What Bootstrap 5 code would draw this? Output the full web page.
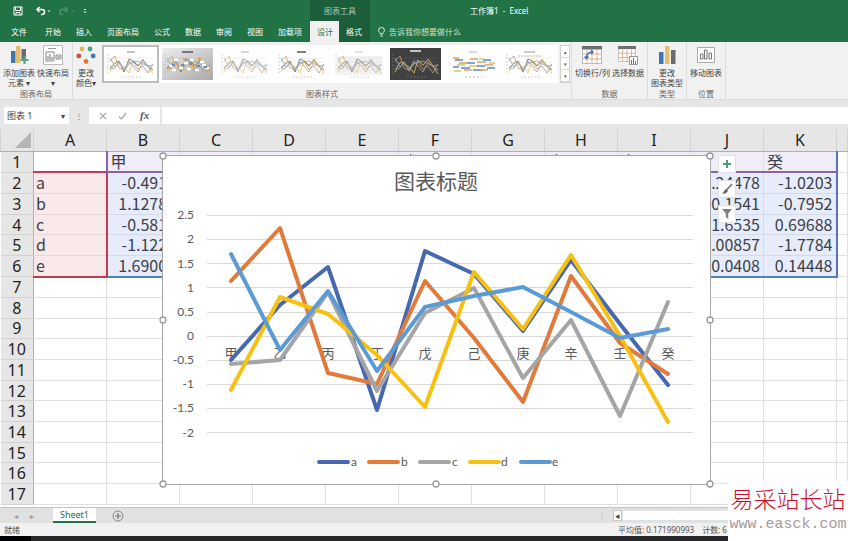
<!DOCTYPE html>
<html lang="zh-CN">
<head>
<meta charset="utf-8">
<meta name="viewport" content="width=device-width, initial-scale=1">
<title>工作簿1 - Excel</title>
<link href="https://cdn.jsdelivr.net/npm/bootstrap@5.3.0/dist/css/bootstrap.min.css" rel="stylesheet">
<style>
:root{--xl:#217346;--xl-dark:#1b5e39;--chrome:#e6e6e6}
body{font-family:"Noto Sans","Noto Sans CJK SC",sans-serif;font-size:8px;line-height:10px;color:#444;background:#fff}
button,input{font:inherit;color:inherit}
button{border:0;background:none;padding:0}
svg{display:block;flex:none}
.xl-head{background:var(--xl);color:#fff}
.title-row{height:21px}
.tab-row{height:21px}
.qat{padding-left:13px;width:310px}
.ctx-title{width:60px;background:var(--xl-dark);color:#a3c9b3}
.doc-title{padding-left:100px}
.tab-row button{padding:0 8px 0 7px;color:#fff}
.tab-row .file-tab{padding:0 11px}
.tab-row .tab-on{background:#f1f1f1;color:var(--xl);padding:0 6px 0 7px}
.tab-row .tab-ctx{background:var(--xl-dark)}
.tab-row .tell{padding:0 8px;color:#cfe3d7}
.ribbon{background:#f1f1f1;height:58px;border-bottom:1px solid #dcdcdc}
.rgroup{border-right:1px solid #dcdcdc;padding-top:3px}
.rgroup .items{height:43px;padding:0 3px;gap:2px}
.rgroup .styles{padding-right:1px}
.rgroup .cap{height:12px;color:#666;text-align:center;line-height:12px}
.rbtn{display:flex;flex-direction:column;align-items:center;text-align:center;white-space:nowrap}
.rbtn svg{margin-bottom:3px}
.gallery{background:#fff;height:38px}
.thumb{width:57px;height:38px;padding:3px;border:0}
.thumb.chosen{padding:1px;border:2px solid #bdbdbd}
.gscroll{width:10px;height:38px;background:#fff;border:1px solid #d0d0d0}
.gscroll button{flex:1;font-size:5px;line-height:8px;border-bottom:1px solid #d8d8d8}
.fbar{background:var(--chrome);padding:7px 0 5px 4px}
.fbar .box{background:#fff;height:17px}
.name-box{width:65px}
.name-box input,.formula{border:0;background:#fff;outline:0;min-width:0}
.name-box input{width:48px;padding:0 3px;font-size:9px}
.side-dots{width:20px;text-align:center}
.fx{width:71px;margin-right:2px}
.sheet{background:#fff;min-height:0;padding-bottom:2px}
.cells{width:100%;table-layout:fixed;border-collapse:collapse;font-family:"Noto Sans CJK SC",sans-serif;font-size:16px;line-height:18px;color:#3d4047}
.cells th{background:var(--chrome);font-family:"Noto Sans",sans-serif;font-weight:400;color:#222;text-align:center;padding:0;border:1px solid #d2d2d2}
.cells thead th{height:22px;border-top:0;border-bottom-color:#b0b0b0}
.cells tbody th{border-left:0;border-right-color:#b0b0b0}
.cells td{padding:0 3px 0 2px;border:1px solid #e0e0e0;white-space:nowrap;vertical-align:top}
.cells td.num{text-align:right;background:#e6ecfa;border-color:#d3daea}
.cells td.cat{background:#f0ecf8;border-bottom:2px solid #8a62a8;padding-left:3px}
.cells td.ser{background:#f9e9eb;border-color:#ead6d9;border-right:2px solid #c23b52}
.cells td.ser-top{border-top:2px solid #c23b52}
.cells td.ser-end{border-bottom:2px solid #c23b52}
.cells td.num-end{border-bottom:2px solid #5680b8}
.cells td.right-end{border-right:2px solid #5c70b4}
.cells td.left-cat{border-left:2px solid #8a62a8}
.corner svg{margin:2px 1px 0 auto}
.chart{position:absolute;left:162px;top:26px;width:549px;background:#fff;border:1px solid #a9a9a9}
.chart>svg{width:100%;height:auto;overflow:visible}
.chart-tools{position:absolute;left:718px;top:26px;display:flex;flex-direction:column;gap:7px}
.chart-tools button{width:18px;height:18px;background:#fff;border:1px solid #e2e2e2;display:flex;align-items:center;justify-content:center}
.chart text{font-family:Lato,"Noto Sans CJK SC",sans-serif;font-size:12px;fill:#595959}
.chart .cat-names text{font-size:13px}
.chart .chart-title{font-family:"Noto Sans CJK SC",sans-serif;font-size:21px}
.tabs-bar{height:16px;background:#e1e1e1;border-top:1px solid #c4c4c4;color:#999}
.sheet-tab{background:#fff;color:var(--xl);border-bottom:2px solid var(--xl);width:43px;font-size:9px;line-height:12px}
.navs{width:53px;padding-left:14px;gap:12px}
.hscroll{width:250px;padding:2px 0;gap:7px}
.hscroll .arrow{width:9px;background:#fff;border:1px solid #c8c8c8;color:#444;font-size:5px;line-height:8px}
.status{height:13px;background:#f1f1f1;color:#555}
.stats{width:230px;gap:8px}
.taskbar{height:5px;background:#29292b}
.taskbar div{width:31px;background:#000}
.stamp{position:absolute;right:0;bottom:0;width:120px;height:60px;background:#fff;text-align:center;z-index:3}
.stamp-name{color:#c8102e;font-family:"Noto Sans CJK SC",sans-serif;font-weight:300;font-size:23px;line-height:34px}
.stamp-url{color:#a79a9c;font-family:"Liberation Mono",monospace;font-size:15px;line-height:20px;text-decoration:none}
</style>
<script src="https://cdn.jsdelivr.net/npm/bootstrap@5.3.0/dist/js/bootstrap.bundle.min.js"></script>
</head>
<body>
<svg width="0" height="0" class="position-absolute" aria-hidden="true">
  <symbol id="plot" viewBox="0 0 51 32">
    <path d="M5 10H48M5 14H48M5 18H48M5 22H48" stroke="#999" stroke-opacity=".25" stroke-width=".6"/>
    <path d="M3 6v19M17 29h20" stroke="#999" stroke-width="1" stroke-dasharray="1.5 2" stroke-opacity=".6"/>
    <g fill="none" stroke-width=".8">
      <path d="M5 20L9 16 14 13 19 24 24 11 28 13 33 18 38 12 43 18 48 22" stroke="#4a5f8c"/>
      <path d="M5 13L10 8 14 20 19 22 24 13 28 18 33 24 38 14 43 19 48 22" stroke="#dc965f"/>
      <path d="M5 21L10 20 14 14 19 23 24 16 28 14 33 21 38 18 43 25 48 16" stroke="#a0a0a0"/>
      <path d="M5 24L10 14 14 16 19 19 24 25 28 12 33 17 38 11 43 18 48 26" stroke="#dfc160"/>
      <path d="M5 10L10 19 14 14 19 21 24 15 28 14 33 13 38 16 43 18 48 17" stroke="#8aaac2"/>
    </g>
  </symbol>
  <symbol id="bars" viewBox="0 0 51 32">
    <path d="M8 12h8M14 20h9M20 15h8M30 18h8M36 12h8M26 22h9M6 19h6M40 20h8" stroke="#5e86bd" stroke-width="1.4"/>
    <path d="M6 10h6M12 15h8M23 11h8M30 14h9M38 17h8M17 22h8M33 22h8" stroke="#dda05f" stroke-width="1.3"/>
    <path d="M10 17h8M22 18h8M32 11h5M42 15h6M7 23h7" stroke="#d9c66b" stroke-width="1.3"/>
    <path d="M18 29h17" stroke="#bbb" stroke-dasharray="2 2"/>
  </symbol>
  <symbol id="tgrid" viewBox="0 0 20 18">
    <path fill="#fff" stroke="#aaa" stroke-width=".8" d="M.5.5h19v17H.5z"/>
    <path fill="#6d6d6d" d="M0 0h20v3.500H0z"/>
    <path fill="none" stroke="#d99a6c" stroke-width=".8" d="M5 4v13M10 4v13M15 4v13M1 8h18M1 13h18"/>
  </symbol>
</svg>

<div class="vh-100 d-flex flex-column position-relative overflow-hidden">
  <header class="xl-head">
    <div class="title-row d-flex align-items-center">
      <div class="qat d-flex align-items-center gap-2">
        <button aria-label="保存"><svg width="10" height="10" viewBox="0 0 10 10"><path fill="none" stroke="#fff" d="M1 1h8v8H1zM2.500 1v3.500h5V1M3 9V6.500h4V9"/></svg></button>
        <button class="ms-1" aria-label="撤消"><svg width="16" height="10" viewBox="0 0 16 10"><path fill="none" stroke="#fff" stroke-width="1.500" d="M2 3.500h5a2.500 2.500 0 0 1 0 5H6M4.500 1L2 3.500 4.500 6"/><path fill="#fff" d="M12.500 4.500h3L14 6z"/></svg></button>
        <button aria-label="恢复"><svg width="16" height="10" viewBox="0 0 16 10"><path fill="none" stroke="#4f9370" stroke-width="1.500" d="M8 3.500H3a2.500 2.500 0 0 0 0 5h1M6 1l2.500 2.500L6 6"/><path fill="#4f9370" d="M12.500 4.500h3L14 6z"/></svg></button>
        <button aria-label="自定义快速访问工具栏"><svg width="4" height="8" viewBox="0 0 4 8"><path fill="#fff" d="M1 2h2v1H1zM.5 4.500h3L2 6z"/></svg></button>
      </div>
      <div class="ctx-title d-flex align-items-center justify-content-center align-self-stretch">图表工具</div>
      <div class="doc-title">工作簿1&nbsp; -&nbsp; Excel</div>
    </div>
    <nav class="tab-row d-flex">
      <button class="file-tab">文件</button><button>开始</button><button>插入</button><button>页面布局</button><button>公式</button><button>数据</button><button>审阅</button><button>视图</button><button>加载项</button><button class="tab-on">设计</button><button class="tab-ctx">格式</button>
      <button class="tell d-flex align-items-center gap-1"><svg width="7" height="10" viewBox="0 0 7 10"><path fill="none" stroke="#fff" stroke-width=".9" d="M2.300 7V6C1 5 .6 4.200.6 3.300a2.900 2.900 0 0 1 5.800 0C6.400 4.200 6 5 4.700 6v1zM2.300 9h2.400"/></svg>告诉我你想要做什么</button>
    </nav>
  </header>

  <section class="ribbon d-flex" aria-label="设计">
    <div class="rgroup">
      <div class="items d-flex">
        <button class="rbtn"><svg width="20" height="20" viewBox="0 0 20 20"><path fill="#3e74b0" d="M2 6h4.500v12H2z"/><path fill="#e9bd6e" d="M7 1h4.500v17H7z"/><path fill="#6b6b6b" d="M12.500 4H17v10h-4.500z"/><path stroke="#4fa58a" stroke-width="2.200" d="M15.500 11v8M11.500 15h8"/></svg>添加图表<br>元素 ▾</button>
        <button class="rbtn"><svg width="20" height="20" viewBox="0 0 20 20"><path fill="#fff" stroke="#bbb" d="M.5.5h19v19H.5z"/><path stroke="#999" d="M5 3.500h8"/><path fill="#fff" stroke="#888" d="M3 7h8v9H3zM13 10h5v4h-5z"/><path stroke="#777" d="M5 15v-4M7 15V9M9 15v-3M14 12h3"/></svg>快速布局<br>▾</button>
      </div>
      <div class="cap">图表布局</div>
    </div>
    <div class="rgroup">
      <div class="items styles d-flex">
        <button class="rbtn pe-1"><svg width="20" height="20" viewBox="0 0 20 20"><circle cx="6" cy="4" r="2.400" fill="#e3b45a"/><circle cx="14" cy="4" r="2.400" fill="#4aa08a"/><circle cx="2.800" cy="11" r="2.400" fill="#cf4f3f"/><circle cx="17.200" cy="11" r="2.400" fill="#4472c4"/><circle cx="10" cy="16.500" r="2.400" fill="#e0762f"/></svg>更改<br>颜色▾</button>
        <div class="gallery d-flex">
          <button class="thumb chosen" aria-label="样式 1"><svg width="51" height="32"><path d="M22 4h8" stroke="#888"/><use href="#plot"/></svg></button>
          <button class="thumb" aria-label="样式 2"><svg width="51" height="32"><defs><linearGradient id="gg" x2="1" y2="1"><stop stop-color="#eee"/><stop offset="1" stop-color="#aaa"/></linearGradient></defs><rect width="51" height="32" fill="url(#gg)"/><path d="M20 4h11" stroke="#555" stroke-width="1.500"/><use href="#plot"/><path d="M7 18h4M12 12h4M17 20h4M22 15h4M28 12h4M33 22h4M38 14h4M43 20h4M10 22h4M25 21h4M40 17h4" stroke="#fff" stroke-width="2.500"/><path d="M6 20h3M14 16h3M21 11h3M30 18h3M36 11h3M44 23h3" stroke="#dca35a" stroke-width="2"/><path d="M10 17h3M19 17h3M27 16h3M35 18h3M42 19h3" stroke="#6c8cba" stroke-width="2"/></svg></button>
          <button class="thumb" aria-label="样式 3"><svg width="51" height="32" opacity=".75"><path d="M22 4h8" stroke="#999"/><use href="#plot"/></svg></button>
          <button class="thumb" aria-label="样式 4"><svg width="51" height="32"><path d="M21 4h9" stroke="#555" stroke-width="1.500"/><use href="#plot"/></svg></button>
          <button class="thumb" aria-label="样式 5"><svg width="51" height="32" opacity=".8"><path fill="#efefef" d="M4 8h46v19H4z"/><path d="M22 4h8" stroke="#bbb"/><use href="#plot"/></svg></button>
          <button class="thumb" aria-label="样式 6"><svg width="51" height="32"><rect width="51" height="32" fill="#404040"/><path d="M20 3h11" stroke="#eee" stroke-width="1.500"/><use href="#plot"/></svg></button>
          <button class="thumb" aria-label="样式 7"><svg width="51" height="32"><path d="M22 4h8" stroke="#bbb"/><use href="#bars"/></svg></button>
          <button class="thumb" aria-label="样式 8"><svg width="51" height="32"><path d="M20 4h11" stroke="#999"/><path d="M14 8h23" stroke="#e0b090" stroke-dasharray="2 1"/><use href="#plot"/></svg></button>
        </div>
        <div class="gscroll d-flex flex-column"><button aria-label="上一行">▴</button><button aria-label="下一行">▾</button><button aria-label="更多">▾</button></div>
      </div>
      <div class="cap">图表样式</div>
    </div>
    <div class="rgroup">
      <div class="items d-flex">
        <button class="rbtn"><svg width="20" height="20" viewBox="0 0 20 20"><use href="#tgrid" width="20" height="18" y="1"/><path fill="none" stroke="#3e74b0" stroke-width="1.500" d="M4.500 13c0-4 2-6 6-6M9 5l2 2-2 2M2.500 11.500l2 2 2-2"/></svg>切换行/列</button>
        <button class="rbtn"><svg width="20" height="20" viewBox="0 0 20 20"><use href="#tgrid" width="18" height="16" y="1"/><path fill="#fff" stroke="#999" d="M11.500 11.500h8v8h-8z"/><path stroke="#777" d="M13.500 19v-4M15.500 19v-6M17.500 19v-3"/></svg>选择数据</button>
      </div>
      <div class="cap">数据</div>
    </div>
    <div class="rgroup">
      <div class="items"><button class="rbtn"><svg width="20" height="20" viewBox="0 0 20 20"><path fill="#3e74b0" d="M2 7h4.500v12H2z"/><path fill="#e9bd6e" d="M8 1h4.500v18H8z"/><path fill="#6b6b6b" d="M14 5h4.500v14H14z"/></svg>更改<br>图表类型</button></div>
      <div class="cap">类型</div>
    </div>
    <div class="rgroup">
      <div class="items"><button class="rbtn"><svg width="20" height="20" viewBox="0 0 20 20"><path fill="#fff" stroke="#aaa" d="M1.500 2.500h17v15h-17z"/><path fill="#fff" stroke="#777" d="M4.500 9h2.500v5H4.500zM8.500 5h2.500v9H8.500zM13 8h2.500v6H13z"/></svg>移动图表</button></div>
      <div class="cap">位置</div>
    </div>
  </section>

  <div class="fbar d-flex">
    <div class="name-box box d-flex align-items-center justify-content-between pe-1"><input aria-label="名称框" value="图表 1"><span>▾</span></div>
    <div class="side-dots align-self-center text-secondary">⋮</div>
    <div class="fx box d-flex align-items-center justify-content-around px-1">
      <button aria-label="取消"><svg width="8" height="8" viewBox="0 0 8 8"><path stroke="#aaa" stroke-width="1.200" d="M1 1l6 6M7 1L1 7"/></svg></button>
      <button aria-label="输入"><svg width="9" height="8" viewBox="0 0 9 8"><path fill="none" stroke="#aaa" stroke-width="1.300" d="M1 4.500L3.500 7 8 1"/></svg></button>
      <button aria-label="插入函数" class="fst-italic"><svg width="11" height="12"><text x="1" y="9" font-family="Liberation Serif, serif" font-size="11" font-weight="700" fill="#555">fx</text></svg></button>
    </div>
    <input class="formula box flex-grow-1" aria-label="编辑栏">
  </div>

  <main class="sheet flex-grow-1 d-flex position-relative">
    <table class="cells">
      <colgroup id="widths"></colgroup>
      <thead><tr id="letters"><th class="corner"><svg width="17" height="17"><path fill="#b5b5b5" d="M16 0v16H0z"/></svg></th></tr></thead>
      <tbody id="grid"></tbody>
    </table>

    <div class="chart">
      <svg viewBox="0 0 547 328" role="img" aria-label="图表标题">
        <text class="chart-title" x="273" y="33" text-anchor="middle">图表标题</text>
        <path stroke="#d9d9d9" d="M44 59.500H530M44 83.500H530M44 107.500H530M44 131.500H530M44 156.500H530M44 180.500H530M44 204.500H530M44 228.500H530M44 252.500H530M44 276.500H530"/>
        <g text-anchor="end"><text x="31" y="63">2.5</text><text x="31" y="87">2</text><text x="31" y="112">1.5</text><text x="31" y="136">1</text><text x="31" y="160">0.5</text><text x="31" y="184">0</text><text x="31" y="208">-0.5</text><text x="31" y="232">-1</text><text x="31" y="256">-1.5</text><text x="31" y="281">-2</text></g>
        <g class="cat-names" text-anchor="middle"><text x="68" y="202">甲</text><text x="117" y="202">乙</text><text x="165" y="202">丙</text><text x="214" y="202">丁</text><text x="262" y="202">戊</text><text x="311" y="202">己</text><text x="360" y="202">庚</text><text x="408" y="202">辛</text><text x="457" y="202">壬</text><text x="505" y="202">癸</text></g>
        <g fill="none" stroke-width="4" stroke-linecap="round" stroke-linejoin="round">
          <path stroke="#4668b0" d="M68 204L117 149 165 111 214 254 262 95 311 118 360 175 408 104 457 168 505 229"/>
          <path stroke="#e07b3c" d="M68 125L117 72 165 217 214 228 262 125 311 182 360 246 408 120 457 187 505 218"/>
          <path stroke="#a5a5a5" d="M68 208L117 204 165 136 214 235 262 157 311 132 360 222 408 164 457 260 505 146"/>
          <path stroke="#f7c015" d="M68 234L117 141 165 158 214 199 262 251 311 116 360 173 408 99 457 180 505 266"/>
          <path stroke="#5b9bd5" d="M68 98L117 194 165 135 214 215 262 151 311 140 360 131 408 156 457 182 505 173"/>
        </g>
        <g fill="none" stroke-width="4" stroke-linecap="round"><path stroke="#4668b0" d="M156 306h29"/><path stroke="#e07b3c" d="M206 306h29"/><path stroke="#a5a5a5" d="M257 306h29"/><path stroke="#f7c015" d="M307 306h29"/><path stroke="#5b9bd5" d="M358 306h29"/></g>
        <text x="188" y="310">a</text><text x="238" y="310">b</text><text x="289" y="310">c</text><text x="338" y="310">d</text><text x="389" y="310">e</text>
        <g fill="#fff" stroke="#999" stroke-width="1.300"><circle cx="0" cy="0" r="3"/><circle cx="273" cy="0" r="3"/><circle cx="547" cy="0" r="3"/><circle cx="0" cy="164" r="3"/><circle cx="547" cy="164" r="3"/><circle cx="0" cy="328" r="3"/><circle cx="273" cy="328" r="3"/><circle cx="547" cy="328" r="3"/></g>
      </svg>
    </div>
    <div class="chart-tools">
      <button aria-label="图表元素"><svg width="8" height="8"><path stroke="#4a9b76" stroke-width="2" d="M4 0v8M0 4h8"/></svg></button>
      <button aria-label="图表样式"><svg width="12" height="12" viewBox="0 0 12 12"><path d="M11 1L5.500 7" stroke="#777" stroke-width="1.800"/><path fill="#666" d="M5 6l2 2c-1 2-3 3-6 2.500C3 9.500 3 7 5 6z"/></svg></button>
      <button aria-label="图表筛选器"><svg width="10" height="10"><path fill="#808080" d="M0 0h10L6.300 4.500V10L3.700 8V4.500z"/></svg></button>
    </div>
  </main>

  <div class="tabs-bar d-flex">
    <div class="navs d-flex"><button aria-label="上一张">◂</button><button aria-label="下一张">▸</button></div>
    <button class="sheet-tab">Sheet1</button>
    <button class="ms-3 align-self-center" aria-label="新工作表"><svg width="12" height="12"><circle cx="6" cy="6" r="5" fill="none" stroke="#888"/><path stroke="#777" stroke-width="1.200" d="M6 3v6M3 6h6"/></svg></button>
    <div class="hscroll d-flex ms-auto"><span>⋮</span><div class="d-flex flex-grow-1"><button class="arrow" aria-label="向左滚动">◀</button><div class="bg-white flex-grow-1 border"></div></div></div>
  </div>
  <footer class="status d-flex align-items-center ps-1">
    <span>就绪</span>
    <div class="stats d-flex ms-auto"><span>平均值: 0.171990993</span><span>计数: 6</span></div>
  </footer>
  <div class="taskbar d-flex"><div></div></div>

  <div class="stamp"><div class="stamp-name">易采站长站</div><a class="stamp-url" href="#">www.easck.com</a></div>
</div>

<script>
const letters = 'ABCDEFGHIJK'.split('');
const rows = [
  ['', '甲', '乙', '丙', '丁', '戊', '己', '庚', '辛', '壬', '癸'],
  ['a', '-0.4913', '', '', '', '', '', '', '', '0.24478', '-1.0203'],
  ['b', '1.12781', '', '', '', '', '', '', '', '0.1541', '-0.7952'],
  ['c', '-0.5812', '', '', '', '', '', '', '', '1.6535', '0.69688'],
  ['d', '-1.1223', '', '', '', '', '', '', '', '0.00857', '-1.7784'],
  ['e', '1.69003', '', '', '', '', '', '', '', '0.0408', '0.14448']
];
const widths = document.getElementById('widths');
widths.innerHTML = '<col style="width:33px">' + letters.map(() => '<col style="width:73px">').join('') + '<col>';
document.getElementById('letters').insertAdjacentHTML('beforeend', letters.map(l => `<th scope="col">${l}</th>`).join('') + '<th></th>');
let html = '';
for (let r = 0; r < 17; r++) {
  html += `<tr><th scope="row">${r + 1}</th>`;
  for (let c = 0; c < 12; c++) {
    const k = [];
    if (r < 6 && c < 11) {
      if (c === 0 && r > 0) k.push('ser');
      if (c === 0 && r === 1) k.push('ser-top');
      if (c === 0 && r === 5) k.push('ser-end');
      if (c > 0 && r === 0) k.push('cat');
      if (c === 1 && r === 0) k.push('left-cat');
      if (c > 0 && r > 0) k.push('num');
      if (c > 0 && r === 5) k.push('num-end');
      if (c === 10) k.push('right-end');
    }
    html += `<td class="${k.join(' ')}">${(rows[r] || [])[c] || ''}</td>`;
  }
  html += '</tr>';
}
document.getElementById('grid').innerHTML = html;
</script>
</body>
</html>
